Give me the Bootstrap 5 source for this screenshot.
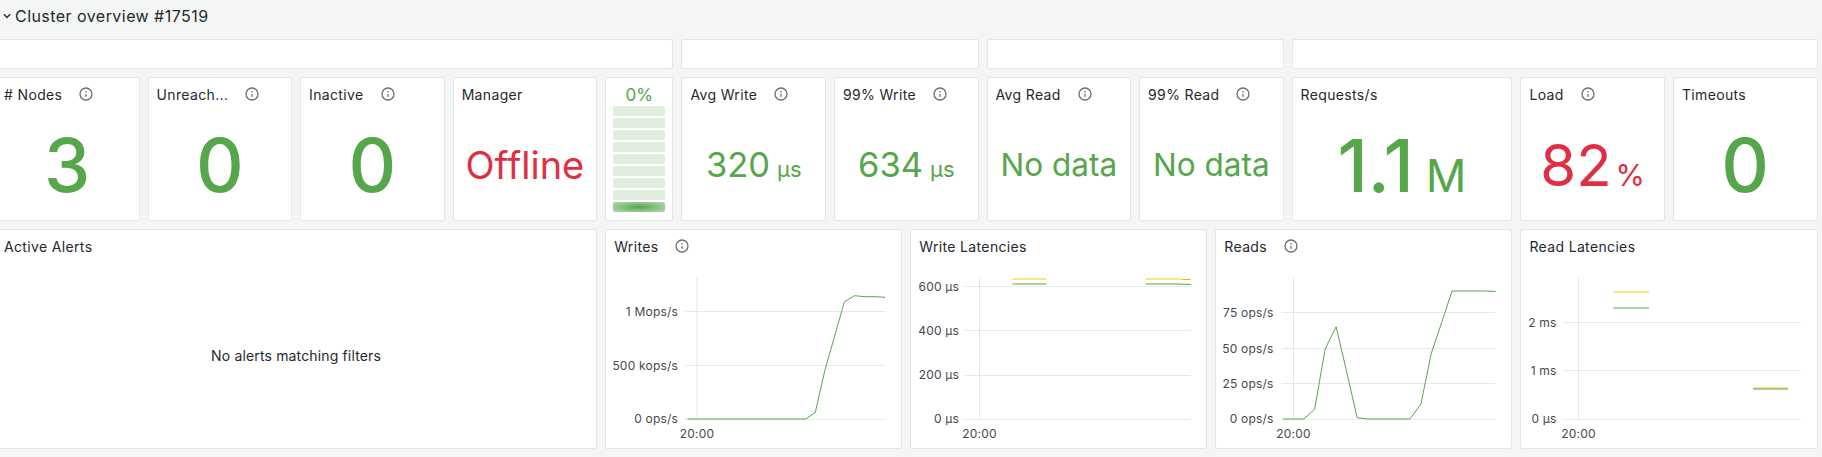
<!DOCTYPE html>
<html lang="en">
<head>
<meta charset="utf-8">
<title>Cluster overview</title>
<link rel="stylesheet" href="https://cdn.jsdelivr.net/npm/bootstrap@5.3.0/dist/css/bootstrap.min.css">
<style>
html,body{height:457px;overflow:hidden}
body{background:#f4f5f5;color:#24292e;font-family:Inter,"Liberation Sans",sans-serif;font-size:14px;letter-spacing:.01071em}
.gf-head{height:39px;font-size:16px;font-weight:400;padding-bottom:8px;letter-spacing:.45px}
.gf-head svg{width:16px;height:16px;fill:#24292e;margin-left:-1px}
.gf-grid{display:grid;grid-template-columns:repeat(24,1fr);grid-template-rows:30px 144px 220px;gap:8px;margin-left:-5px;width:1822.5px}
.s1{grid-column:span 1}.s2{grid-column:span 2}.s3{grid-column:span 3}.s4{grid-column:span 4}.s7{grid-column:span 7}.s8{grid-column:span 8}.s9{grid-column:span 9}
.gf-panel{--bs-card-border-color:#e4e5e6;--bs-card-border-radius:2px;--bs-card-inner-border-radius:1px;background:#fff;min-width:0;overflow:hidden}
.gf-title{height:32px;flex:none;padding:0 8px;font-weight:400;letter-spacing:.35px;white-space:nowrap}
.gf-info{width:16px;height:16px;margin-left:16px;fill:#6c7074;flex:none}
.gf-stat{flex:1;font-weight:400;color:#56a64b;white-space:nowrap;line-height:1;letter-spacing:0}
.gf-bad{color:#e02f44}
.v74{font-size:74px;font-weight:500}.v37{font-size:38px}.v34{font-size:34.5px}.v31{font-size:31.5px}.v73{font-size:73px;font-weight:500}.v55{font-size:58px}
.u22{font-size:22px;margin-left:7px}.u45{font-size:45px;margin-left:12px;font-weight:400}.u37{font-size:30px;margin-left:4px}
.gf-pct{color:#56a64b;font-size:17px;font-weight:400;line-height:21px;text-align:center;padding-top:7px;letter-spacing:0}
.gf-bars{gap:2px;padding:0 7px;margin-top:0}
.gf-bar{height:10px;border-radius:2px;background:#e1eedf}
.gf-bar-on{background:radial-gradient(ellipse at center,#56a64b 0%,#8fc388 55%,#b6d8b1 100%)}
.gf-chart{display:block;width:100%;flex:1;min-height:0}
.gf-chart text{font-family:Inter,"Liberation Sans",sans-serif;font-size:12px;fill:#46494d;letter-spacing:.2px}
.gf-chart .gl{stroke:#e8e9ea;stroke-width:1}
.gf-chart .vl{stroke:#e4e5e6;stroke-width:1}
.gf-chart .ln{fill:none;stroke:#56a64b;stroke-width:1}
.gf-chart .sg{fill:none;stroke:#56a64b;stroke-width:2;stroke-opacity:.5}
.gf-chart .sy{fill:none;stroke:#f2cc0c;stroke-width:1.5;stroke-opacity:.65}
.gf-chart .tg{fill:none;stroke:#56a64b;stroke-width:1}
.gf-chart .ty{fill:none;stroke:#e8b800;stroke-width:1}
.gf-empty{flex:1;font-weight:400}
</style>
</head>
<body>
<svg width="0" height="0" class="d-block"><defs>
<symbol id="i-info" viewBox="0 0 24 24"><path d="M12,2A10,10,0,1,0,22,12,10,10,0,0,0,12,2Zm0,18a8,8,0,1,1,8-8A8,8,0,0,1,12,20Zm0-8.5a1,1,0,0,0-1,1v3a1,1,0,0,0,2,0v-3A1,1,0,0,0,12,11.5Zm0-4a1.25,1.25,0,1,0,1.25,1.25A1.25,1.25,0,0,0,12,7.5Z"/></symbol>
</defs></svg>
<div class="gf-head d-flex align-items-center">
<svg viewBox="0 0 24 24"><path d="M17,9.17a1,1,0,0,0-1.41,0L12,12.71,8.46,9.17a1,1,0,0,0-1.41,0,1,1,0,0,0,0,1.42l4.24,4.24a1,1,0,0,0,1.42,0L17,10.59A1,1,0,0,0,17,9.17Z"/></svg>
<span>Cluster overview #17519</span>
</div>
<div class="gf-grid">
<div class="card gf-panel s9"></div><div class="card gf-panel s4"></div><div class="card gf-panel s4"></div><div class="card gf-panel s7"></div>

<div class="card gf-panel s2"><div class="gf-title d-flex align-items-center"># Nodes<svg class="gf-info"><use href="#i-info"/></svg></div><div class="gf-stat d-flex align-items-center justify-content-center"><span class="v74">3</span></div></div>
<div class="card gf-panel s2"><div class="gf-title d-flex align-items-center">Unreach...<svg class="gf-info"><use href="#i-info"/></svg></div><div class="gf-stat d-flex align-items-center justify-content-center"><span class="v74">0</span></div></div>
<div class="card gf-panel s2"><div class="gf-title d-flex align-items-center">Inactive<svg class="gf-info"><use href="#i-info"/></svg></div><div class="gf-stat d-flex align-items-center justify-content-center"><span class="v74">0</span></div></div>
<div class="card gf-panel s2"><div class="gf-title d-flex align-items-center">Manager</div><div class="gf-stat gf-bad d-flex align-items-center justify-content-center"><span class="v37">Offline</span></div></div>
<div class="card gf-panel s1"><div class="gf-pct">0%</div><div class="gf-bars d-flex flex-column"><div class="gf-bar"></div><div class="gf-bar"></div><div class="gf-bar"></div><div class="gf-bar"></div><div class="gf-bar"></div><div class="gf-bar"></div><div class="gf-bar"></div><div class="gf-bar"></div><div class="gf-bar gf-bar-on"></div></div></div>
<div class="card gf-panel s2"><div class="gf-title d-flex align-items-center">Avg Write<svg class="gf-info"><use href="#i-info"/></svg></div><div class="gf-stat d-flex align-items-center justify-content-center"><span class="v34">320<span class="u22">µs</span></span></div></div>
<div class="card gf-panel s2"><div class="gf-title d-flex align-items-center">99% Write<svg class="gf-info"><use href="#i-info"/></svg></div><div class="gf-stat d-flex align-items-center justify-content-center"><span class="v34">634<span class="u22">µs</span></span></div></div>
<div class="card gf-panel s2"><div class="gf-title d-flex align-items-center">Avg Read<svg class="gf-info"><use href="#i-info"/></svg></div><div class="gf-stat d-flex align-items-center justify-content-center"><span class="v31">No data</span></div></div>
<div class="card gf-panel s2"><div class="gf-title d-flex align-items-center">99% Read<svg class="gf-info"><use href="#i-info"/></svg></div><div class="gf-stat d-flex align-items-center justify-content-center"><span class="v31">No data</span></div></div>
<div class="card gf-panel s3"><div class="gf-title d-flex align-items-center">Requests/s</div><div class="gf-stat d-flex align-items-center justify-content-center"><span class="v73">1.1<span class="u45">M</span></span></div></div>
<div class="card gf-panel s2"><div class="gf-title d-flex align-items-center">Load<svg class="gf-info"><use href="#i-info"/></svg></div><div class="gf-stat gf-bad d-flex align-items-center justify-content-center"><span class="v55">82<span class="u37">%</span></span></div></div>
<div class="card gf-panel s2"><div class="gf-title d-flex align-items-center">Timeouts</div><div class="gf-stat d-flex align-items-center justify-content-center"><span class="v74">0</span></div></div>

<div class="card gf-panel s8"><div class="gf-title d-flex align-items-center">Active Alerts</div><div class="gf-empty d-flex align-items-center justify-content-center">No alerts matching filters</div></div>

<div class="card gf-panel s4"><div class="gf-title d-flex align-items-center">Writes<svg class="gf-info"><use href="#i-info"/></svg></div>
<svg class="gf-chart" viewBox="1 1 294 186">
<line class="gl" x1="79.5" x2="280" y1="50.5" y2="50.5"/><line class="gl" x1="79.5" x2="280" y1="104.5" y2="104.5"/><line class="gl" x1="79.5" x2="280" y1="158.5" y2="158.5"/>
<line class="vl" x1="91.5" x2="91.5" y1="17" y2="158"/>
<text x="72.5" y="54.5" text-anchor="end">1 Mops/s</text><text x="72.5" y="108.5" text-anchor="end">500 kops/s</text><text x="72.5" y="162" text-anchor="end">0 ops/s</text>
<text x="91.5" y="176.5" text-anchor="middle">20:00</text>
<polyline class="ln" points="82,158 200,158 209.7,151.7 219.4,109 238.9,40.7 249,34.7 259,35.7 269.6,35.7 279.7,36.3"/>
</svg></div>

<div class="card gf-panel s4"><div class="gf-title d-flex align-items-center">Write Latencies</div>
<svg class="gf-chart" viewBox="1 1 294 186">
<line class="gl" x1="53" x2="280" y1="25.5" y2="25.5"/><line class="gl" x1="53" x2="280" y1="69.5" y2="69.5"/><line class="gl" x1="53" x2="280" y1="114.5" y2="114.5"/><line class="gl" x1="53" x2="280" y1="158.5" y2="158.5"/>
<line class="vl" x1="69" x2="69" y1="17" y2="158"/>
<text x="48.5" y="29.5" text-anchor="end">600 µs</text><text x="48.5" y="73.5" text-anchor="end">400 µs</text><text x="48.5" y="118" text-anchor="end">200 µs</text><text x="48.5" y="162" text-anchor="end">0 µs</text>
<text x="69" y="176.5" text-anchor="middle">20:00</text>
<path class="sy" d="M102 18H136M235 18H272"/><path class="sg" d="M102 23H136M235 23H268"/><path class="ty" d="M272 18.5H280"/><path class="tg" d="M268 23L280 23.5"/>
</svg></div>

<div class="card gf-panel s4"><div class="gf-title d-flex align-items-center">Reads<svg class="gf-info"><use href="#i-info"/></svg></div>
<svg class="gf-chart" viewBox="1 1 294 186">
<line class="gl" x1="66" x2="280" y1="51.5" y2="51.5"/><line class="gl" x1="66" x2="280" y1="87.5" y2="87.5"/><line class="gl" x1="66" x2="280" y1="122.5" y2="122.5"/><line class="gl" x1="66" x2="280" y1="158.5" y2="158.5"/>
<line class="vl" x1="78" x2="78" y1="17" y2="158"/>
<text x="58" y="55.5" text-anchor="end">75 ops/s</text><text x="58" y="91.5" text-anchor="end">50 ops/s</text><text x="58" y="126.5" text-anchor="end">25 ops/s</text><text x="58" y="162" text-anchor="end">0 ops/s</text>
<text x="78" y="176.5" text-anchor="middle">20:00</text>
<polyline class="ln" points="67.5,158 88.2,158 99.1,148.3 109.6,88 120.6,65.7 131.1,110.7 141.6,156.7 152.2,158 194.3,158 205.3,143.3 215.8,92.3 226.4,60.7 236.5,30 270,30 280.2,30.5"/>
</svg></div>

<div class="card gf-panel s4"><div class="gf-title d-flex align-items-center">Read Latencies</div>
<svg class="gf-chart" viewBox="1 1 294 186">
<line class="gl" x1="42.5" x2="280" y1="61.5" y2="61.5"/><line class="gl" x1="42.5" x2="280" y1="109.5" y2="109.5"/><line class="gl" x1="42.5" x2="280" y1="158.5" y2="158.5"/>
<line class="vl" x1="58" x2="58" y1="17" y2="158"/>
<text x="36" y="65.5" text-anchor="end">2 ms</text><text x="36" y="113.5" text-anchor="end">1 ms</text><text x="36" y="162" text-anchor="end">0 µs</text>
<text x="58" y="176.5" text-anchor="middle">20:00</text>
<path class="sy" d="M93 31H128.4"/><path class="sg" d="M93 47H128.4"/><path class="sy" d="M232.6 127H267.4"/><path class="tg" d="M232.6 128H267.4"/>
</svg></div>
</div>
<script src="https://cdn.jsdelivr.net/npm/bootstrap@5.3.0/dist/js/bootstrap.bundle.min.js"></script>
</body>
</html>
